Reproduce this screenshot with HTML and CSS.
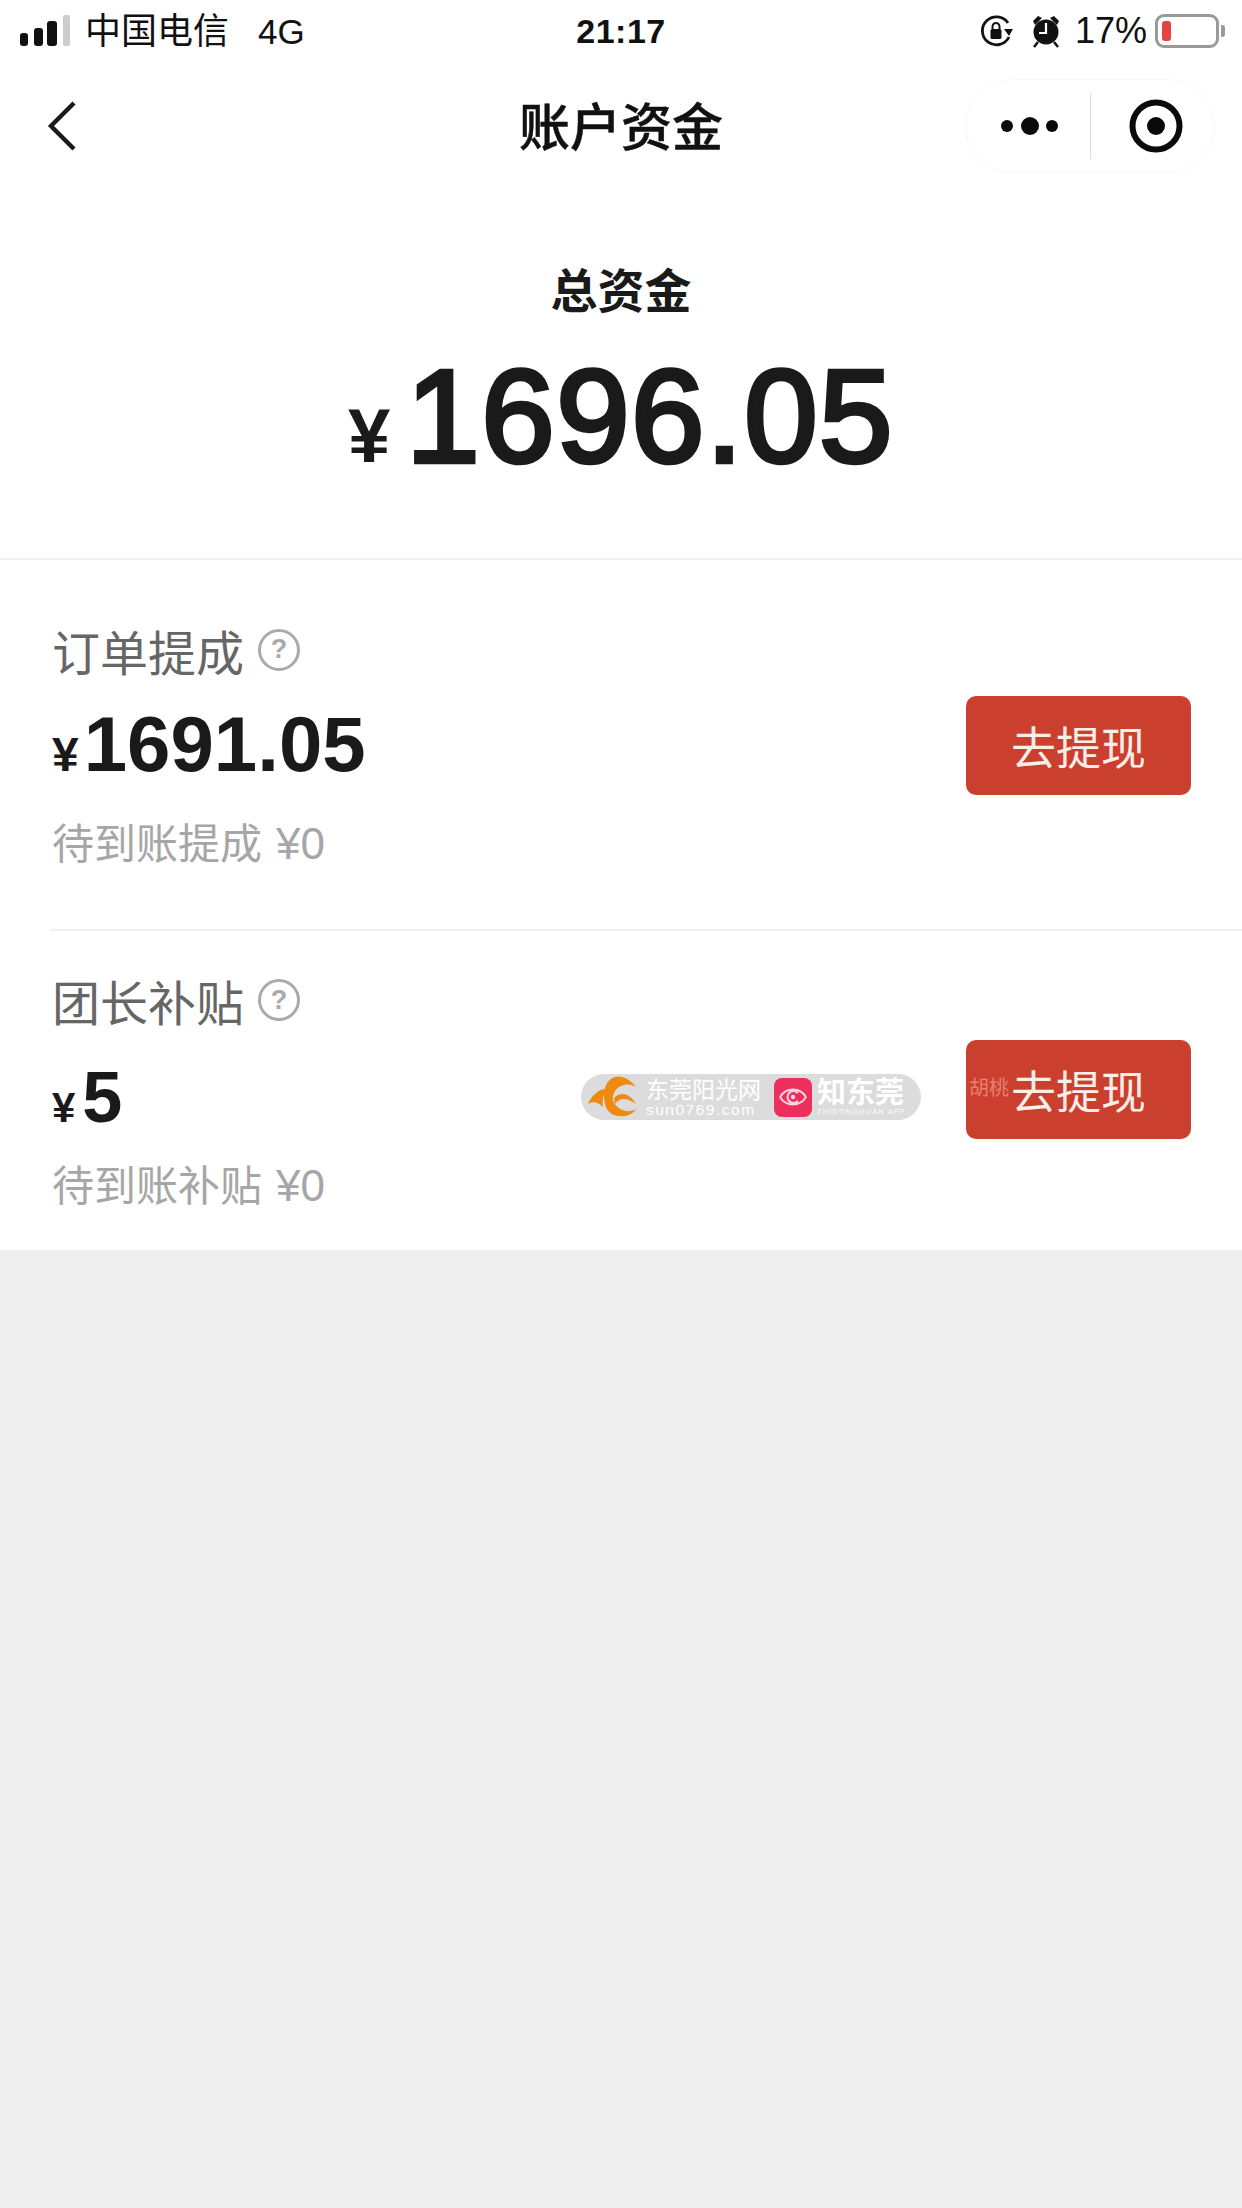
FILE: index.html
```html
<!DOCTYPE html>
<html lang="zh-CN">
<head>
    <meta charset="UTF-8">
    <meta name="viewport" content="width=device-width, initial-scale=1.0">
    <title>账户资金</title>
    <link rel="stylesheet" href="styles.css">
</head>
<body>
    <div class="page">
        <div class="status-bar">
            <div class="status-left">
                <svg class="signal" width="50" height="32" viewBox="0 0 50 32">
                    <rect x="0" y="18" width="8" height="13" rx="3" fill="#111"/>
                    <rect x="14" y="13" width="9" height="18" rx="3" fill="#111"/>
                    <rect x="27" y="6" width="10" height="25" rx="3" fill="#111"/>
                    <rect x="43" y="0" width="7" height="31" rx="2" fill="#ccc"/>
                </svg>
                <span class="carrier">中国电信</span>
                <span class="network">4G</span>
            </div>
            <div class="status-time">21:17</div>
            <div class="status-right">
                <svg class="lock-icon" width="32" height="34" viewBox="0 0 32 34">
                    <path d="M27 9 A14 14 0 1 0 28 23" fill="none" stroke="#111" stroke-width="2.8"/>
                    <path d="M23 15 L32 15 L28 22 Z" fill="#111"/>
                    <rect x="9.5" y="15" width="11" height="10" rx="1.5" fill="#111"/>
                    <path d="M11.5 15 V12.5 A3.5 3.5 0 0 1 18.5 12.5 V15" fill="none" stroke="#111" stroke-width="2"/>
                </svg>
                <svg class="alarm-icon" width="30" height="34" viewBox="0 0 30 34">
                    <circle cx="15" cy="18" r="12.5" fill="#111"/>
                    <path d="M2 7 L7 2 L11 4 L4 11 Z M28 7 L23 2 L19 4 L26 11 Z" fill="#111"/>
                    <path d="M7 28 L3 33 M23 28 L27 33" stroke="#111" stroke-width="2.5"/>
                    <path d="M15 9 V19 H8" fill="none" stroke="#fff" stroke-width="2.2"/>
                </svg>
                <span class="battery-text">17%</span>
                <div class="battery"><div class="battery-level"></div></div>
                <div class="battery-nub"></div>
            </div>
        </div>

        <div class="nav-bar">
            <svg class="back-icon" width="34" height="52" viewBox="0 0 34 52">
                <polyline points="27,3 4,26 27,49" fill="none" stroke="#1a1a1a" stroke-width="4.4"/>
            </svg>
            <div class="nav-title">账户资金</div>
            <div class="capsule">
                <div class="capsule-more">
                    <span class="dot"></span><span class="dot dot-big"></span><span class="dot"></span>
                </div>
                <div class="capsule-line"></div>
                <svg class="capsule-close" width="54" height="54" viewBox="0 0 54 54">
                    <circle cx="27" cy="27" r="23.5" fill="none" stroke="#0a0a0a" stroke-width="6"/>
                    <circle cx="27" cy="27" r="9" fill="#0a0a0a"/>
                </svg>
            </div>
        </div>

        <div class="summary">
            <div class="summary-label">总资金</div>
            <div class="summary-amount"><span class="summary-yen">¥</span><span class="summary-num">1696.05</span></div>
        </div>

        <div class="fund-row fund-row-first">
            <div class="fund-info">
                <div class="fund-label">
                    <span>订单提成</span>
                    <span class="help">?</span>
                </div>
                <div class="fund-amount"><span class="fund-yen">¥</span><span>1691.05</span></div>
                <div class="fund-pending">待到账提成<span class="pending-num">¥0</span></div>
            </div>
            <div class="withdraw-btn">去提现</div>
        </div>

        <div class="fund-row fund-row-second">
            <div class="fund-info">
                <div class="fund-label">
                    <span>团长补贴</span>
                    <span class="help">?</span>
                </div>
                <div class="fund-amount fund-amount-small"><span class="fund-yen">¥</span><span>5</span></div>
                <div class="fund-pending">待到账补贴<span class="pending-num">¥0</span></div>
            </div>
            <div class="withdraw-btn">
                <span class="btn-mark">胡桃</span>
                去提现
            </div>
            <div class="watermark">
                <svg class="wm-logo" width="50" height="42" viewBox="0 0 50 42">
                    <path d="M48 11 C42 3 33 -1 27 1 C20 3 16 10 16 20 C16 30 20 37 26 39 C34 42 44 40 48 33 C44 36 36 36 31 32 C26 29 24 24 25 20 C27 13 31 10 36 9 C40 8 45 9 48 11 Z" fill="#ee8a12"/>
                    <path d="M26 22 C30 18 35 17 39 19 C43 21 46 24 48 28 C44 25 40 23 36 23 C32 23 29 25 27 28 Z" fill="#ee8a12"/>
                    <path d="M18 13 C11 13 4 19 0 28 C5 25 10 26 15 31 C14 25 15 19 18 13 Z" fill="#ee8a12"/>
                </svg>
                <div class="wm-site">
                    <div class="wm-site-name">东莞阳光网</div>
                    <div class="wm-site-url">sun0769.com</div>
                </div>
                <div class="wm-app-icon">
                    <svg width="28" height="24" viewBox="0 0 28 24">
                        <path d="M1 12 C7 2 21 2 27 12" fill="none" stroke="#fbd9e2" stroke-width="2"/>
                        <path d="M1 12 C7 22 21 22 27 12" fill="none" stroke="#fbd9e2" stroke-width="2"/>
                        <path d="M19 8 A6 6 0 1 0 19 16" fill="none" stroke="#fbd9e2" stroke-width="2"/>
                        <circle cx="14" cy="12" r="2.2" fill="#fbd9e2"/>
                    </svg>
                </div>
                <div class="wm-app">
                    <div class="wm-app-name">知东莞</div>
                    <div class="wm-app-sub">ZHIDONGGUAN APP</div>
                </div>
            </div>
        </div>

        <div class="rest"></div>
    </div>
</body>
</html>
```

FILE: styles.css
```css
* { box-sizing: border-box; }
html, body { margin: 0; padding: 0; }
body { font-family: "Liberation Sans", "Noto Sans CJK SC", sans-serif; background: #efefef; color: #1a1a1a; }
.page { width: 1242px; height: 2208px; display: flex; flex-direction: column; overflow: hidden; }

.status-bar { height: 62px; padding: 0 17px; background: #fff; display: grid; grid-template-columns: 1fr auto 1fr; align-items: center; color: #111; }
.status-left { display: flex; align-items: center; padding-left: 3px; }
.signal { margin-right: 15px; }
.carrier { font-size: 36px; line-height: 44px; margin-top: 2px; }
.network { font-size: 35px; line-height: 44px; margin-left: 29px; margin-top: 1px; }
.status-time { font-size: 34px; font-weight: bold; letter-spacing: 0.5px; }
.status-right { display: flex; align-items: center; justify-content: flex-end; }
.lock-icon { margin-right: 18px; }
.alarm-icon { margin-right: 14px; }
.battery-text { font-size: 36px; margin-right: 8px; }
.battery { width: 64px; height: 34px; border: 3px solid #999; border-radius: 9px; padding: 4px; background: #fff; }
.battery-level { width: 9px; height: 100%; background: #e2453f; border-radius: 3px; }
.battery-nub { width: 4px; height: 12px; margin-left: 2px; background: #999; border-radius: 0 3px 3px 0; }

.nav-bar { height: 128px; padding: 0 27px; background: #fff; display: grid; grid-template-columns: 1fr auto 1fr; align-items: center; }
.back-icon { justify-self: start; margin-left: 20px; }
.nav-title { font-family: "Noto Sans CJK SC", sans-serif; font-size: 51px; line-height: 60px; font-weight: 500; color: #111; margin-top: -5px; -webkit-text-stroke: 0.5px #111; }
.capsule { justify-self: end; width: 250px; height: 94px; border: 1px solid #f8f8f8; border-radius: 47px; display: flex; align-items: center; padding-left: 35px; }
.capsule-more { width: 57px; display: flex; align-items: center; justify-content: space-between; }
.dot { width: 12px; height: 12px; border-radius: 50%; background: #0a0a0a; }
.dot-big { width: 18px; height: 18px; }
.capsule-line { width: 1px; height: 66px; background: #ddd; margin-left: 32px; }
.capsule-close { margin-left: 38px; }

.summary { height: 370px; padding-top: 72px; background: #fff; border-bottom: 2px solid #f0f0f0; text-align: center; }
.summary-label { font-size: 47px; line-height: 60px; font-weight: bold; color: #1a1a1a; }
.summary-amount { margin-top: 25px; height: 140px; line-height: 140px; font-size: 132px; white-space: nowrap; }
.summary-num { letter-spacing: 1.5px; -webkit-text-stroke: 4.5px #1a1a1a; }
.summary-yen { font-size: 76px; font-weight: bold; margin-right: 16px; }

.fund-row { position: relative; background: #fff; display: flex; align-items: center; justify-content: space-between; padding-left: 52px; padding-right: 51px; }
.fund-row-first { height: 369px; padding-top: 58px; padding-bottom: 59px; }
.fund-row-second { height: 321px; padding-top: 40px; padding-bottom: 38px; }
.fund-row-second::before { content: ""; position: absolute; left: 50px; right: 0; top: 0; height: 2px; background: #f0f0f0; }

.fund-label { height: 60px; display: flex; align-items: center; font-size: 48px; color: #666; }
.help { width: 42px; height: 42px; margin-left: 14px; border: 3px solid #aaa; border-radius: 50%; display: flex; align-items: center; justify-content: center; font-size: 27px; font-weight: bold; color: #aaa; }
.fund-amount { margin-top: 19px; height: 90px; line-height: 90px; font-size: 78px; font-weight: bold; white-space: nowrap; }
.fund-yen { font-size: 48px; margin-right: 5px; }
.fund-amount-small { font-size: 72px; margin-top: 22px; }
.fund-amount-small .fund-yen { font-size: 42px; margin-right: 7px; }
.fund-pending { margin-top: 30px; height: 50px; line-height: 50px; font-size: 42px; color: #a6a6a6; white-space: nowrap; }
.pending-num { font-size: 44px; margin-left: 14px; }
.fund-row-second .fund-pending { margin-top: 19px; }

.withdraw-btn { position: relative; width: 225px; height: 99px; margin-top: 2px; border-radius: 10px; background: #cb3f2e; color: #fbeee8; font-size: 45px; display: flex; align-items: center; justify-content: center; }
.fund-row-second .withdraw-btn { margin-top: -2px; }
.btn-mark { position: absolute; left: 3px; top: 36px; font-size: 20px; line-height: 24px; color: #e8806f; }

.watermark { position: absolute; left: 581px; top: 145px; width: 340px; height: 46px; border-radius: 23px; background: #dcdcdc; display: flex; align-items: center; padding-left: 7px; color: #fff; }
.wm-logo { flex: none; }
.wm-site { margin-left: 8px; width: 116px; }
.wm-site-name { font-size: 23px; line-height: 26px; white-space: nowrap; }
.wm-site-url { font-size: 15.5px; line-height: 14px; letter-spacing: 1.5px; white-space: nowrap; }
.wm-app-icon { margin-left: 12px; width: 38px; height: 39px; border-radius: 8px; background: #ec2f5c; display: flex; align-items: center; justify-content: center; }
.wm-app { margin-left: 5px; }
.wm-app-name { font-size: 29px; line-height: 30px; font-weight: bold; white-space: nowrap; }
.wm-app-sub { font-size: 7px; line-height: 8px; letter-spacing: 1.4px; white-space: nowrap; }

.rest { flex: 1; background: #efefef; }
```
